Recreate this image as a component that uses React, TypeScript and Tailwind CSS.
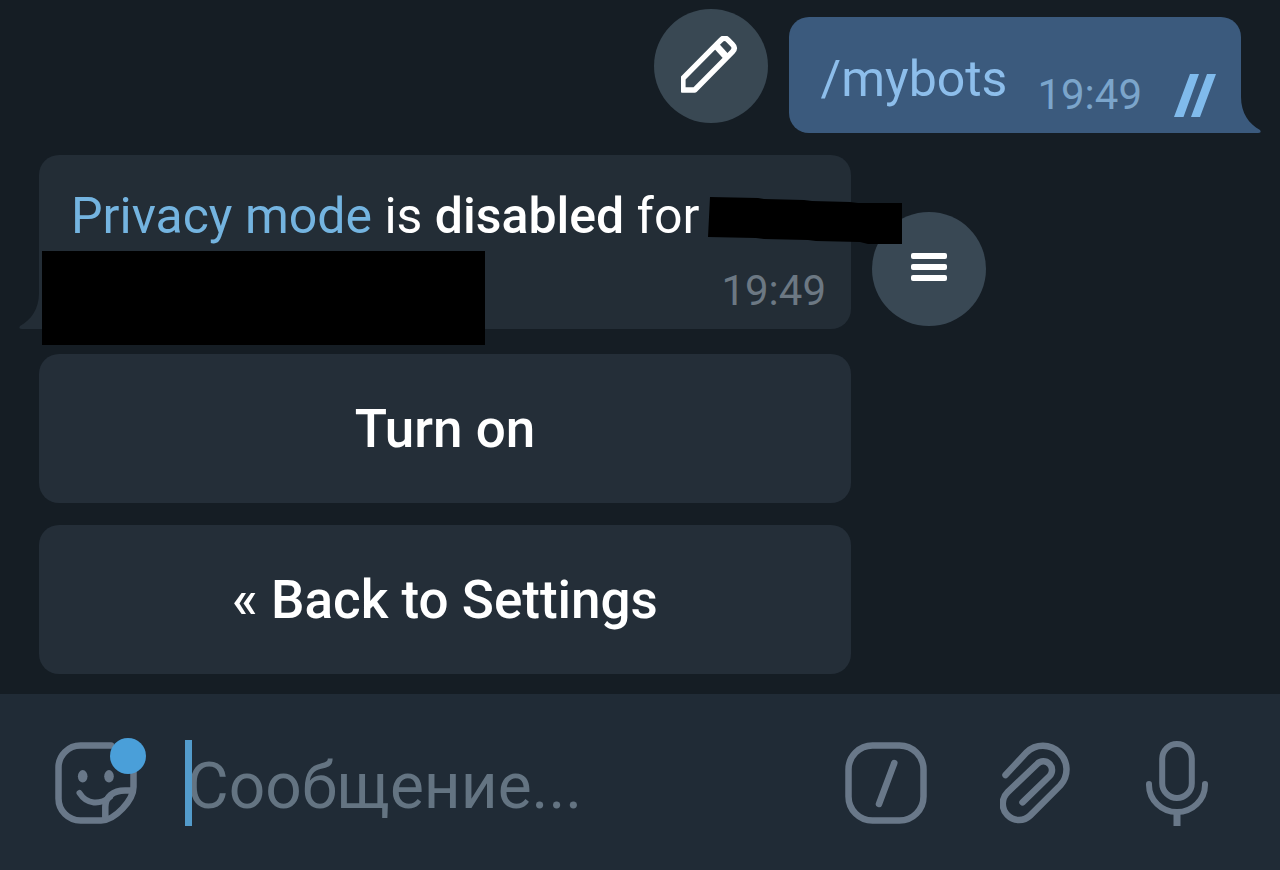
import { useState } from "react";

const keyboard = ["Turn on", "« Back to Settings"];

// Small corner at the bottom of a bubble
function Tail({ className }: { className: string }) {
  return (
    <svg viewBox="0 0 21 36" className={`absolute bottom-0 h-9 w-[21px] ${className}`} aria-hidden="true">
      <path d="M0 0C0 16 8 27 19 33Q21 36 17 36H0Z" fill="currentColor" />
    </svg>
  );
}

function PencilIcon() {
  return (
    <svg viewBox="0 0 60 60" className="size-[60px]" fill="none" stroke="white" strokeWidth="5.4" strokeLinejoin="round" aria-hidden="true">
      <path d="M1.9 54V42.3L40.3 3.6Q43.5 .6 46.7 3.6L51.6 8.6Q55 12 51.6 15.6L13.7 54Z" />
      <path d="M35 9.5L45 20.5" strokeWidth="7" />
    </svg>
  );
}

function StickerIcon() {
  return (
    <svg viewBox="0 0 82 82" className="size-[82px]" fill="none" stroke="currentColor" strokeWidth="6.5" strokeLinecap="round" aria-hidden="true">
      <path d="M78.5 30V45C78.5 58 60 78.5 46 78.5H25.5A22 22 0 0 1 3.5 56.5V25.5A22 22 0 0 1 25.5 3.5H56" />
      <path d="M77 48.5H70C58 48.5 50.3 55 50.3 65V77" />
      <path d="M24.5 51C32 63 45 63 55 55" strokeWidth="6" />
      <ellipse cx="27.7" cy="34.3" rx="4.8" ry="6.2" fill="currentColor" stroke="none" />
      <ellipse cx="54" cy="34.3" rx="4.8" ry="6.2" fill="currentColor" stroke="none" />
    </svg>
  );
}

function CommandIcon() {
  return (
    <svg viewBox="0 0 82 82" className="size-[82px]" fill="none" stroke="currentColor" strokeWidth="6.5" strokeLinecap="round" aria-hidden="true">
      <rect x="3.5" y="3.5" width="75" height="75" rx="24" />
      <path d="M49.3 21L34 62" />
    </svg>
  );
}

function ClipIcon() {
  return (
    <svg viewBox="0 0 70 82" className="h-[82px] w-[70px]" fill="none" stroke="currentColor" strokeWidth="6.5" strokeLinecap="round" aria-hidden="true">
      <path d="M5.5 33L26.6 10.4A23.6 23.6 0 0 1 60.4 43.3L30.3 73.4A16 16 0 0 1 7.7 50.1L37.2 22A8.6 8.6 0 0 1 49.6 34L22.5 60.3" />
    </svg>
  );
}

function MicIcon() {
  return (
    <svg viewBox="0 0 62 86" className="h-[86px] w-[62px]" fill="none" stroke="currentColor" strokeWidth="6" aria-hidden="true">
      <rect x="16.2" y="4" width="29.6" height="54" rx="14.8" />
      <path d="M3 44V45A28 27 0 0 0 59 45V44" strokeLinecap="round" />
      <path d="M31 72V86" strokeWidth="7" />
    </svg>
  );
}

export default function App() {
  const [text, setText] = useState("");

  return (
    <div className="flex min-h-screen flex-col bg-[#151d24] font-[Roboto,sans-serif] text-white">
      <main className="flex grow flex-col px-[39px] pt-[9px] pb-5">
        <div className="flex items-start justify-end gap-[21px]">
          <button aria-label="Edit" className="flex size-[114px] items-center justify-center rounded-full bg-[#394853]">
            <PencilIcon />
          </button>
          <div className="relative mt-2 flex h-[116px] items-end rounded-[20px] rounded-br-none bg-[#3b5a7d] pr-[25px] pb-4 pl-8">
            <a href="#" className="pb-2 text-[50px] leading-[60px] text-[#8dbeeb]">/mybots</a>
            <time className="ml-[30px] text-[42px] leading-[44px] text-[#7ba5cb]">19:49</time>
            <svg viewBox="0 0 42 43" className="ml-8 h-[43px] w-[42px]" fill="#80bbec" aria-hidden="true">
              <path d="M16 0H25L9.500 43H0ZM33 0H42L26 43H17Z" />
            </svg>
            <Tail className="left-full text-[#3b5a7d]" />
          </div>
        </div>

        <div className="mt-[22px] flex items-end gap-[21px]">
          <div className="relative z-10 h-[174px] w-full max-w-[812px] rounded-[20px] rounded-bl-none bg-[#232d36] px-8 pt-8">
            <p className="flex text-[50px] leading-[58px] whitespace-pre">
              <a href="#" className="text-[#74b4e0]">Privacy mode</a> is <b className="font-medium">disabled</b> for{" "}
            </p>
            <svg viewBox="0 0 194 48" className="absolute top-[42px] left-[669px] h-12 w-[194px]" aria-hidden="true">
              <path d="M2 0L50 1L56 2L96 3L104 4L142 5L150 6H194V47H160L152 45L108 44L100 43L56 42L48 41L0 40Z" />
            </svg>
            <time className="absolute right-[25px] bottom-4 text-[42px] leading-[44px] text-[#6c7883]">19:49</time>
            <Tail className="right-full -scale-x-100 text-[#232d36]" />
            <div className="absolute top-24 left-[3px] h-[94px] w-[443px] bg-black" />
          </div>
          <button aria-label="Menu" className="mb-[3px] flex size-[114px] shrink-0 flex-col items-center justify-center gap-[5px] rounded-full bg-[#394854] pb-1">
            <span className="h-1.5 w-9 rounded-xs bg-white" />
            <span className="h-1.5 w-9 rounded-xs bg-white" />
            <span className="h-1.5 w-9 rounded-xs bg-white" />
          </button>
        </div>

        <div className="mt-[25px] flex max-w-[812px] flex-col gap-[22px]">
          {keyboard.map((label) => (
            <button key={label} className="h-[149px] rounded-[20px] bg-[#242e38] text-[53px] leading-[64px] font-medium">
              {label}
            </button>
          ))}
        </div>
      </main>

      <footer className="flex items-center bg-[#202b36] pt-[46px] pr-[72px] pb-11 pl-[55px] text-[#697889]">
        <button aria-label="Stickers" className="relative">
          <StickerIcon />
          <span className="absolute -top-1 -right-[9px] size-9 rounded-full bg-[#4a9fd9]" />
        </button>
        <div className="relative ml-12 flex h-[86px] min-w-0 flex-1 items-center">
          <span className="absolute left-0 h-full w-[7px] bg-[#539bcb]" />
          <input
            aria-label="Сообщение"
            value={text}
            onChange={(e) => setText(e.target.value)}
            placeholder="Сообщение..."
            className="h-full w-full bg-transparent pt-1.5 pl-0.5 text-[64px] text-white outline-none placeholder:text-[#647482]"
          />
        </div>
        <button aria-label="Bot commands"><CommandIcon /></button>
        <button aria-label="Attach" className="ml-[73px]"><ClipIcon /></button>
        <button aria-label="Voice message" className="ml-[76px]"><MicIcon /></button>
      </footer>
    </div>
  );
}
